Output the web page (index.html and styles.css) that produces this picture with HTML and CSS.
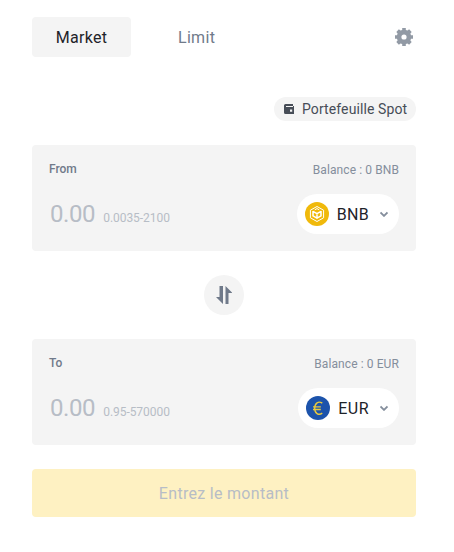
FILE: index.html
```html
<!DOCTYPE html>
<html lang="fr">
  <head>
    <meta charset="UTF-8" />
    <meta name="viewport" content="width=device-width, initial-scale=1.0" />
    <title>Convert</title>
    <link rel="stylesheet" href="styles.css">
  </head>
  <body>
    <div class="convert">
      <div class="tabs">
        <button class="tab active">Market</button>
        <button class="tab">Limit</button>
        <svg class="settings" viewBox="0 0 18 18" width="18" height="18">
          <path
            fill="#929aa5"
            fill-rule="evenodd"
            d="M7.200 0h3.600v2l1.700.6 1.600-1.300 2.600 2.600-1.300 1.600.6 1.700h2v3.600h-2l-.6 1.700 1.300 1.600-2.600 2.600-1.600-1.300-1.700.6v2H7.200v-2l-1.700-.6-1.600 1.300-2.600-2.600 1.300-1.600-.6-1.700H0V7.200h2l.6-1.700-1.300-1.600 2.600-2.600 1.600 1.300L7.200 2zM9 6.400a2.600 2.600 0 1 0 0 5.200a2.600 2.600 0 0 0 0-5.200z"
          />
        </svg>
      </div>

      <div class="wallet">
        <svg viewBox="0 0 10 10" width="10" height="10">
          <path
            fill="#474d57"
            fill-rule="evenodd"
            d="M1.500 0H9v2h1v8H1.500A1.500 1.500 0 0 1 0 8.500v-7A1.500 1.500 0 0 1 1.500 0zM2 2v1h7V2zM6 5.500v2.200h2.200V5.500z"
          />
        </svg>
        <span class="wallet-name">Portefeuille Spot</span>
      </div>

      <div class="card">
        <div class="card-head">
          <span class="label">From</span>
          <span class="balance">Balance : 0 BNB</span>
        </div>
        <div class="card-row">
          <div class="amount">
            <span class="value">0.00</span>
            <span class="range">0.0035-2100</span>
          </div>
          <button class="coin">
            <svg class="coin-logo" viewBox="0 0 24 24" width="24" height="24">
              <circle cx="12" cy="12" r="12" fill="#f0b90b" />
              <g fill="none" stroke="#fff" stroke-width="1">
                <path d="M12 4.500l6.600 3.700v7.600L12 19.500l-6.600-3.700V8.200z" />
                <path d="M8 9.300l4 2.300l4-2.300M12 11.600v5.400M8 9v4.800l4 2.300l4-2.300V9" stroke-width="1.500" />
                <path d="M9.800 7.800L12 6.600l2.200 1.200" />
              </g>
            </svg>
            <span class="coin-name">BNB</span>
            <svg class="arrow" viewBox="0 0 8 6" width="8" height="6">
              <path d="M.5 1.500L4 4.900L7.500 1.500" fill="none" stroke="#848e9c" stroke-width="1.800" />
            </svg>
          </button>
        </div>
      </div>

      <button class="swap">
        <svg viewBox="0 0 16 18" width="16" height="18">
          <path fill="#707a8a" d="M3.500 0H7v18L0 11h3.500zM9.500 18V0l7 7h-4v11z" />
        </svg>
      </button>

      <div class="card">
        <div class="card-head">
          <span class="label">To</span>
          <span class="balance">Balance : 0 EUR</span>
        </div>
        <div class="card-row">
          <div class="amount">
            <span class="value">0.00</span>
            <span class="range">0.95-570000</span>
          </div>
          <button class="coin">
            <svg class="coin-logo" viewBox="0 0 24 24" width="24" height="24">
              <circle cx="12" cy="12" r="12" fill="#1c53ab" />
              <path d="M16.300 7.200C12.500 4.600 8.700 7.200 8.700 12.200S12.500 19.800 16.300 17.200M7 10.900h7.800M7 13.500h7.800" fill="none" stroke="#e9c93c" stroke-width="1.400" />
            </svg>
            <span class="coin-name eur">EUR</span>
            <svg class="arrow" viewBox="0 0 8 6" width="8" height="6">
              <path d="M.5 1.500L4 4.900L7.500 1.500" fill="none" stroke="#848e9c" stroke-width="1.800" />
            </svg>
          </button>
        </div>
      </div>

      <button class="submit" disabled>Entrez le montant</button>
    </div>
  </body>
</html>
```
FILE: styles.css
```css
* {
  margin: 0;
  padding: 0;
  box-sizing: border-box;
}
body {
  background: #fff;
  font-family: Roboto, "Liberation Sans", sans-serif;
}
button {
  border: none;
  background: none;
  font-family: inherit;
  cursor: pointer;
}
.convert {
  display: flex;
  flex-direction: column;
  width: 384px;
  margin: 17px 0 0 32px;
}
.tabs {
  display: flex;
  align-items: center;
  height: 40px;
}
.tab {
  height: 40px;
  padding: 0 23px;
  border-radius: 4px;
  font-size: 16px;
  font-weight: 450;
  letter-spacing: 0.3px;
  color: #707a8a;
}
.tab + .tab {
  margin-left: 24px;
}
.tab.active {
  width: 99px;
  background: #f4f4f4;
  color: #1e2329;
}
.settings {
  margin: 0 3px 0 auto;
}
.wallet {
  display: flex;
  align-items: center;
  align-self: flex-end;
  width: 142px;
  height: 24px;
  margin: 40px 0 24px;
  padding-left: 10px;
  border-radius: 12px;
  background: #f4f4f4;
}
.wallet-name {
  margin-left: 8px;
  font-size: 14px;
  letter-spacing: 0.1px;
  color: #474d57;
  white-space: nowrap;
}
.card {
  height: 106px;
  padding: 16px 17px;
  border-radius: 4px;
  background: #f4f4f4;
}
.card-head {
  display: flex;
  justify-content: space-between;
  height: 17px;
  line-height: 17px;
  font-size: 12px;
  color: #848e9c;
}
.label {
  font-weight: 500;
  color: #707a8a;
}
.balance {
  line-height: 19px;
  letter-spacing: 0.1px;
}
.card-row {
  display: flex;
  align-items: center;
  justify-content: space-between;
  height: 40px;
  margin-top: 16px;
}
.amount {
  display: flex;
  align-items: baseline;
  padding-left: 1px;
  color: #b7bdc6;
}
.value {
  font-size: 24px;
  letter-spacing: -0.4px;
}
.range {
  margin-left: 8px;
  font-size: 12px;
  letter-spacing: -0.05px;
}
.coin {
  display: flex;
  align-items: center;
  height: 40px;
  padding: 0 11px 0 8px;
  border-radius: 20px;
  background: #fff;
}
.coin-name {
  margin: 0 11px 0 8px;
  font-size: 16px;
  letter-spacing: 0.3px;
  color: #1e2329;
}
.coin-name.eur {
  letter-spacing: 0.5px;
}
.swap {
  display: flex;
  align-items: center;
  justify-content: center;
  align-self: center;
  width: 40px;
  height: 40px;
  margin: 24px 0;
  border-radius: 50%;
  background: #f4f4f4;
}
.submit {
  height: 48px;
  margin-top: 24px;
  border-radius: 4px;
  background: #fef1c2;
  font-size: 16px;
  letter-spacing: 0.3px;
  color: #b7bdc6;
}
```
